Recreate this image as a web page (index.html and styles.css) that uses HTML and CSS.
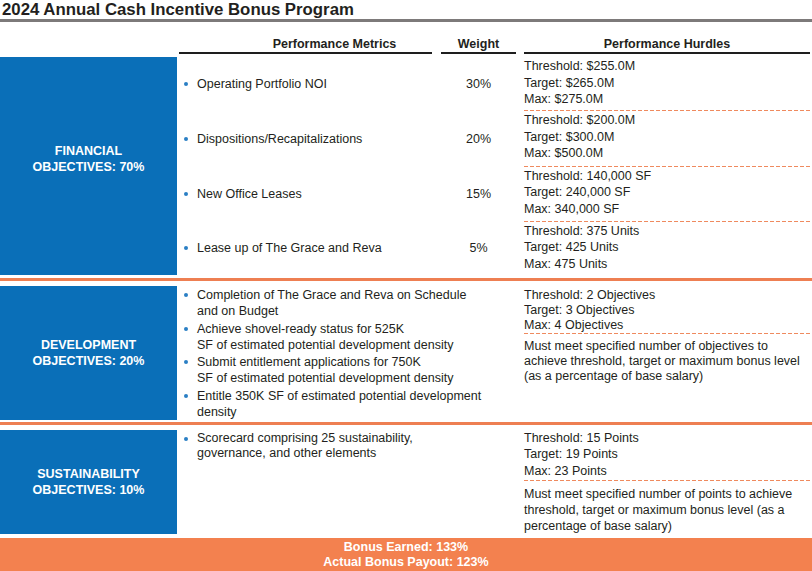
FILE: index.html
```html
<!DOCTYPE html>
<html lang="en">
<head>
<meta charset="utf-8">
<title>2024 Annual Cash Incentive Bonus Program</title>
<link rel="stylesheet" href="styles.css">
</head>
<body>
<div class="page">
  <h1 class="title">2024 Annual Cash Incentive Bonus Program</h1>
  <div class="rule"></div>

  <div class="grid head">
    <div></div>
    <div class="hcell h-metrics">Performance Metrics</div>
    <div class="hcell h-weight">Weight</div>
    <div class="hcell h-hurdles">Performance Hurdles</div>
  </div>

  <section class="grid sec fin">
    <div class="label fin-label">FINANCIAL<br>OBJECTIVES: 70%</div>

    <div class="metric"><span class="dot"></span>Operating Portfolio NOI</div>
    <div class="weight">30%</div>
    <div class="hurdle dashed">Threshold: $255.0M<br>Target: $265.0M<br>Max: $275.0M</div>

    <div class="metric"><span class="dot"></span>Dispositions/Recapitalizations</div>
    <div class="weight">20%</div>
    <div class="hurdle dashed">Threshold: $200.0M<br>Target: $300.0M<br>Max: $500.0M</div>

    <div class="metric"><span class="dot"></span>New Office Leases</div>
    <div class="weight">15%</div>
    <div class="hurdle dashed">Threshold: 140,000 SF<br>Target: 240,000 SF<br>Max: 340,000 SF</div>

    <div class="metric"><span class="dot"></span>Lease up of The Grace and Reva</div>
    <div class="weight">5%</div>
    <div class="hurdle">Threshold: 375 Units<br>Target: 425 Units<br>Max: 475 Units</div>
  </section>

  <div class="sep sep-a"></div>

  <section class="grid sec dev">
    <div class="label">DEVELOPMENT<br>OBJECTIVES: 20%</div>
    <ul class="list dev-list">
      <li><span class="dot"></span><span>Completion of The Grace and Reva on Schedule<br>and on Budget</span></li>
      <li><span class="dot"></span><span>Achieve shovel-ready status for 525K<br>SF of estimated potential development density</span></li>
      <li><span class="dot"></span><span>Submit entitlement applications for 750K<br>SF of estimated potential development density</span></li>
      <li><span class="dot"></span><span>Entitle 350K SF of estimated potential development<br>density</span></li>
    </ul>
    <div class="weight"></div>
    <div class="hurdles dev-hurdles">
      <div class="block dashed">Threshold: 2 Objectives<br>Target: 3 Objectives<br>Max: 4 Objectives</div>
      <div class="block note">Must meet specified number of objectives to<br>achieve threshold, target or maximum bonus level<br>(as a percentage of base salary)</div>
    </div>
  </section>

  <div class="sep sep-b"></div>

  <section class="grid sec sus">
    <div class="label">SUSTAINABILITY<br>OBJECTIVES: 10%</div>
    <ul class="list sus-list">
      <li><span class="dot"></span><span>Scorecard comprising 25 sustainability,<br>governance, and other elements</span></li>
    </ul>
    <div class="weight"></div>
    <div class="hurdles sus-hurdles">
      <div class="block dashed">Threshold: 15 Points<br>Target: 19 Points<br>Max: 23 Points</div>
      <div class="block note">Must meet specified number of points to achieve<br>threshold, target or maximum bonus level (as a<br>percentage of base salary)</div>
    </div>
  </section>

  <footer class="footer">Bonus Earned: 133%<br>Actual Bonus Payout: 123%</footer>
</div>
</body>
</html>
```

FILE: styles.css
```css
* { box-sizing: border-box; }

html, body {
  margin: 0;
  padding: 0;
  background: #ffffff;
}

body {
  font-family: "Liberation Sans", Arial, Helvetica, sans-serif;
  font-size: 12.5px;
  color: #231f20;
}

.page {
  width: 812px;
  height: 571px;
  overflow: hidden;
}

.title {
  margin: 0;
  padding-left: 2px;
  font-size: 16.8px;
  line-height: 19px;
  font-weight: bold;
  color: #231f20;
  white-space: nowrap;
}

.rule {
  height: 3px;
  background: #7d7a7a;
}

.grid {
  display: grid;
  grid-template-columns: 179px 262px 83px 1fr;
}

/* header row */
.head {
  height: 35px;
}

.hcell {
  padding-top: 15px;
  height: 32px;
  line-height: 15px;
  font-weight: bold;
  text-align: center;
  border-bottom: 2px solid #1e1e1e;
  white-space: nowrap;
}

.h-metrics { margin-right: 9px; padding-left: 58px; }
.h-weight { margin-right: 8px; }
.h-hurdles { margin-right: 2px; }

/* sections */
.label {
  grid-column: 1;
  margin-right: 2px;
  background: #0a6fb8;
  color: #ffffff;
  font-weight: bold;
  font-size: 12.5px;
  line-height: 16px;
  text-align: center;
  display: flex;
  align-items: center;
  justify-content: center;
}

.fin {
  height: 218px;
  grid-template-rows: 54px 55.5px 55px 53.5px;
}

.fin-label {
  grid-row: 1 / span 4;
  padding-bottom: 14px;
}

.metric {
  grid-column: 2;
  display: flex;
  align-items: center;
  padding-left: 5px;
  white-space: nowrap;
  line-height: 16px;
}

.dot {
  flex: none;
  width: 4px;
  height: 4px;
  border-radius: 50%;
  background: #2a7fc4;
  margin-right: 9px;
}

.weight {
  grid-column: 3;
  display: flex;
  align-items: center;
  justify-content: center;
  padding-right: 8px;
}

.hurdle {
  grid-column: 4;
  padding: 1px 0 0;
  line-height: 16.5px;
  white-space: nowrap;
}

.dashed {
  background-image: repeating-linear-gradient(90deg, #ef8a5e 0 4px, transparent 4px 6px);
  background-size: 100% 1px;
  background-position: left bottom;
  background-repeat: no-repeat;
}

/* separators */
.sep {
  height: 3px;
  background: #ee7f52;
}

.sep-a { margin: 3px 0 5px; }
.sep-b { margin: 4px 0 5px; }

/* development / sustainability */
.dev { height: 132px; }
.sus { height: 103px; }

.list {
  grid-column: 2;
  margin: 0;
  padding: 0 0 0 5px;
  list-style: none;
  white-space: nowrap;
  display: flex;
  flex-direction: column;
}

.list li {
  display: flex;
  align-items: flex-start;
}

.list li .dot {
  margin-top: 6px;
}

.dev-list {
  padding-top: 1px;
  gap: 1.5px;
  line-height: 16px;
}

.sus-list {
  padding-top: 0.5px;
  line-height: 15px;
}

.hurdles {
  grid-column: 4;
  white-space: nowrap;
}

.dev-hurdles { line-height: 15px; padding-top: 1.5px; }
.dev-hurdles .dashed { padding-bottom: 1px; }
.dev-hurdles .note { padding-top: 5px; }

.sus-hurdles { line-height: 16.3px; }
.sus-hurdles .dashed { padding-bottom: 2px; }
.sus-hurdles .note { padding-top: 5px; line-height: 16px; }

/* footer */
.footer {
  margin-top: 5px;
  height: 33px;
  padding-top: 1.5px;
  background: #f3814f;
  color: #ffffff;
  font-weight: bold;
  line-height: 15px;
  text-align: center;
}
```
